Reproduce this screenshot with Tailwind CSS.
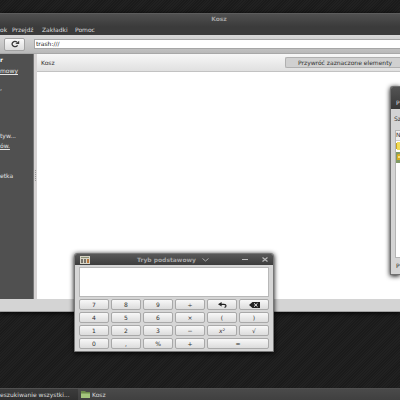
<!DOCTYPE html>
<html lang="pl">
<head>
  <meta charset="UTF-8">
  <meta name="viewport" content="width=device-width, initial-scale=1.0">
  <title>Kosz</title>
  <script src="https://cdn.jsdelivr.net/npm/@tailwindcss/browser@4"></script>
</head>
<body class="h-screen overflow-hidden font-['DejaVu_Sans',sans-serif] text-[6px] leading-[8px] text-[#303030]">
<div class="relative h-full flex flex-col overflow-hidden bg-[#1e1e1e] bg-[repeating-linear-gradient(135deg,#1b1b1b_0px,#1b1b1b_1px,#212121_1px,#212121_2px)]">

  <!-- Menedżer plików -->
  <main class="mt-[13px] mb-[76px] flex-1 min-h-0 flex flex-col bg-[#d4d4d4] border-b border-[#a0a0a0] shadow-[0_1px_5px_#000]">
    <header class="h-[22px] shrink-0 border-t border-[#5c5c5c] bg-linear-to-b from-[#505050] to-[#3b3b3b] to-60%">
      <h1 class="pt-px pl-[38px] text-center font-bold text-[#a2a2a2]">Kosz</h1>
      <nav class="pt-[3px] flex text-[#dedede]">
        <a href="#" class="w-3">ok</a>
        <a href="#" class="w-[30px]">Przejdź</a>
        <a href="#" class="w-[33px]">Zakładki</a>
        <a href="#">Pomoc</a>
      </nav>
    </header>

    <div class="h-[19px] shrink-0 flex items-center gap-[10px] pl-[4px] border-b border-[#a8a8a8] bg-linear-to-b from-[#d8d8d8] to-[#b9b9b9]">
      <button aria-label="Odśwież" class="w-[21px] h-[13px] flex items-center justify-center rounded-[2px] border border-[#a2a2a2] bg-linear-to-b from-[#fafafa] to-[#dcdcdc]">
        <svg class="w-[10px] h-[8px]" viewBox="0 0 10 8" fill="none"><path d="M7.6 5.4A3 2.5 0 1 1 7 2.1" stroke="#3a3a3a" stroke-width="1.3"/><path d="M9.2 .8V4.1H5.3z" fill="#3a3a3a"/></svg>
      </button>
      <input aria-label="Położenie" value="trash:///" class="flex-1 min-w-0 h-[8px] px-px bg-white outline outline-[#a6a6a6] text-[#222]">
    </div>

    <div class="flex-1 min-h-0 flex">
      <aside class="w-[34px] shrink-0 flex flex-col bg-[#505050] text-[#e4e4e4] border-r border-[#777] whitespace-nowrap">
        <div class="pt-[2px] font-bold text-white">r</div>
        <a href="#" class="pt-[3px] underline">mowy</a>
        <div class="pt-[9px]">,</div>
        <div class="pt-[40px]">tyw...</div>
        <a href="#" class="pt-[2px] underline">ów.</a>
        <div class="pt-[22px]">etka</div>
      </aside>
      <div class="w-[3px] shrink-0 pt-[116px] flex flex-col items-center gap-px bg-[#d6d3d3]">
        <i class="size-px bg-[#999]"></i><i class="size-px bg-[#999]"></i><i class="size-px bg-[#999]"></i><i class="size-px bg-[#999]"></i><i class="size-px bg-[#999]"></i><i class="size-px bg-[#999]"></i>
      </div>
      <section class="flex-1 min-w-0 bg-white">
        <div class="h-[18px] pl-1 flex items-center justify-between border-b border-[#c2c2c2] bg-linear-to-b from-[#f7f7f7] to-[#e0e0e0]">
          <h2>Kosz</h2>
          <button class="h-[11px] w-[115px] pl-[12px] text-left whitespace-nowrap rounded-l-[2px] border border-r-0 border-[#b0b0b0] bg-[#d0d0d0]">Przywróć zaznaczone elementy</button>
        </div>
      </section>
    </div>
    <footer class="h-[12px] shrink-0 bg-[#d4d4d4]"></footer>
  </main>

  <!-- Okno wyszukiwania -->
  <section class="absolute left-[390px] right-0 top-[86px] h-[189px] flex flex-col rounded-tl-[3px] border border-r-0 border-[#707070] bg-[#d4d4d4] shadow-[0_1px_5px_#000] whitespace-nowrap">
    <header class="h-[22px] shrink-0 pt-[12px] pl-[5px] rounded-tl-[2px] bg-linear-to-b from-[#545454] to-[#383838] text-[#dedede]">P</header>
    <div class="h-[21px] shrink-0 pt-[6px] pl-[3px]"><span class="block w-[6px]">Sz</span></div>
    <table class="ml-[4px] block flex-1 border border-r-0 border-[#b4b4b4] bg-white">
      <thead class="block"><tr class="block h-[10px] bg-[#eee] border-b border-[#ccc]"><th class="block text-left font-normal">N</th></tr></thead>
      <tbody class="block">
        <tr class="block h-[11px]"><td class="block py-px"><svg class="w-[4px] h-[8px]" viewBox="0 0 4 8"><path d="M0 1h3v6H0z" fill="#c9a51e"/><path d="M1 0h3v8H1z" fill="#f0dc5a"/></svg></td></tr>
        <tr class="block h-[11px] bg-[#829a66]"><td class="block py-px"><svg class="w-[4px] h-[8px]" viewBox="0 0 4 8"><path d="M1 2l1-1h2v6H1z" fill="#d8ad22"/><path d="M2 3h2v2H2z" fill="#f3e184"/></svg></td></tr>
      </tbody>
    </table>
    <footer class="h-[16px] shrink-0 pt-[4px] pl-[5px]">P</footer>
  </section>

  <!-- Kalkulator -->
  <section class="absolute left-[74px] top-[253px] w-[200px] flex flex-col rounded-t-[3px] border border-[#777] bg-[#d6d6d6] shadow-[0_1px_5px_#000]">
    <header class="h-[11px] px-[5px] flex items-center justify-between rounded-t-[2px] bg-linear-to-b from-[#595959] to-[#3d3d3d] text-[#a6a6a6]">
      <svg class="w-[10px] h-[8px]" viewBox="0 0 10 8"><path d="M0 0h10v8H0z" fill="#d6d3c5"/><path d="M1 1h8v1H1z" fill="#8c9279"/><path d="M1 3h2v4H1zM4 3h2v4H4z" fill="#77736a"/><path d="M7 3h2v4H7z" fill="#b8773d"/></svg>
      <h2 class="ml-[14px] flex items-center gap-[6px] font-bold">Tryb podstawowy
        <svg class="w-[7px] h-[4px]" viewBox="0 0 7 4" fill="none"><path d="M.5 .5l3 2.5 3-2.5" stroke="#aaa"/></svg>
      </h2>
      <div class="flex items-center gap-[14px]">
        <button aria-label="Minimalizuj"><svg class="w-[6px] h-[5px]" viewBox="0 0 6 5"><path d="M0 2h6v1H0z" fill="#bbb"/></svg></button>
        <button aria-label="Zamknij"><svg class="w-[6px] h-[5px]" viewBox="0 0 6 5"><path d="M.5 .5l5 4m0-4l-5 4" stroke="#bbb" stroke-width="1.2"/></svg></button>
      </div>
    </header>
    <div class="px-[4px] pt-[2px] pb-[2px] flex flex-col gap-[2px]">
      <textarea aria-label="Wyrażenie" class="block h-[30px] resize-none border border-[#b8b8b8] bg-white"></textarea>
      <div class="h-[50px] grid grid-cols-6 grid-rows-4 gap-x-[2px] gap-y-[2px] *:flex *:items-center *:justify-center *:rounded-[2px] *:border *:border-[#a9a9a9] *:bg-linear-to-b *:from-[#f8f8f8] *:to-[#dcdcdc]">
        <button>7</button><button>8</button><button>9</button><button>÷</button>
        <button aria-label="Cofnij"><svg class="w-[9px] h-[6px]" viewBox="0 0 9 6" fill="none"><path d="M2 2.3h4Q8 2.3 8 3.8T6.5 5.4" stroke="#222" stroke-width="1.2"/><path d="M3.6 0v4.6L0 2.3z" fill="#222"/></svg></button>
        <button aria-label="Usuń"><svg class="w-[11px] h-[6px]" viewBox="0 0 11 6"><path d="M0 3l3.5-3H11v6H3.5z" fill="#222"/><path d="M5 1.3l3.5 3.4m0-3.4L5 4.7" stroke="#eee"/></svg></button>
        <button>4</button><button>5</button><button>6</button><button>×</button><button>(</button><button>)</button>
        <button>1</button><button>2</button><button>3</button><button>−</button><button class="italic">x²</button><button>√</button>
        <button>0</button><button>,</button><button>%</button><button>+</button><button class="col-span-2">=</button>
      </div>
    </div>
  </section>

  <!-- Panel zadań -->
  <nav class="h-[12px] shrink-0 flex border-t border-[#505050] bg-linear-to-b from-[#4a4a4a] to-[#404040] text-[#dcdcdc] whitespace-nowrap">
    <button class="w-[78px] text-left bg-linear-to-b from-[#3c3c3c] to-[#303030]">eszukiwanie wszystki...</button>
    <button class="flex-1 pl-[3px] flex items-center gap-[2px]">
      <svg class="w-[9px] h-[7px]" viewBox="0 0 9 7"><path d="M0 0h4l1 1h4v6H0z" fill="#6d8c4a"/><path d="M0 2.5h9V7H0z" fill="#a5c57d"/></svg>
      Kosz
    </button>
  </nav>
</div>
</body>
</html>
